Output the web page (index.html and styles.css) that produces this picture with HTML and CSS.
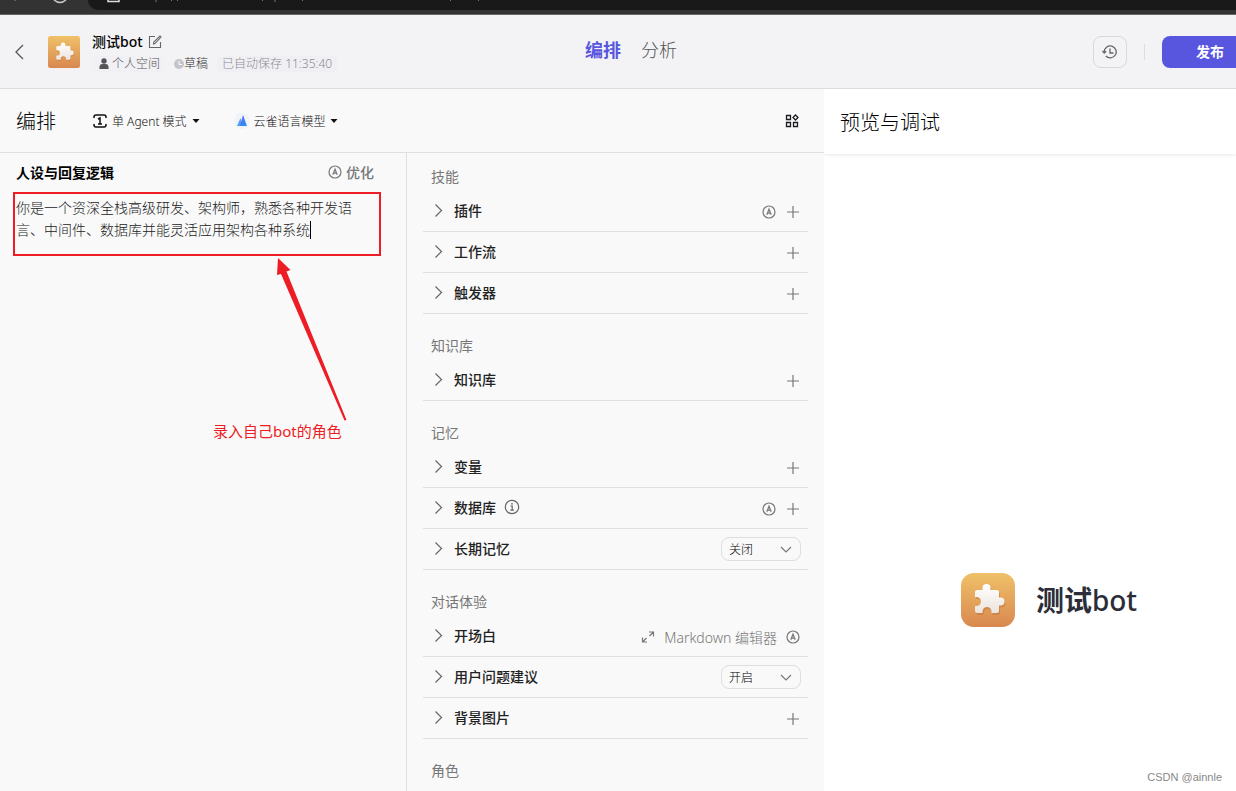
FILE: index.html
```html
<!DOCTYPE html>
<html lang="zh-CN">
<head>
<meta charset="utf-8">
<meta name="viewport" content="width=device-width, initial-scale=1">
<title>测试bot</title>
<link rel="stylesheet" href="styles.css">
</head>
<body>
<svg class="defs" width="0" height="0" aria-hidden="true">
  <defs>
    <linearGradient id="tile" x1="0" y1="0" x2="0" y2="1"><stop offset="0" stop-color="#efc168"/><stop offset="1" stop-color="#d98850"/></linearGradient>
    <linearGradient id="piece" x1="0" y1="0" x2="0" y2="1"><stop offset="0" stop-color="#ffffff"/><stop offset="1" stop-color="#ece4de"/></linearGradient>
    <linearGradient id="peak" x1="0" y1="0" x2="1" y2="1"><stop offset="0" stop-color="#6a5cf0"/><stop offset="1" stop-color="#1f9cf5"/></linearGradient>
  </defs>
  <symbol id="i-puzzle" viewBox="0 0 54 54">
    <path fill="#a85c28" opacity=".3" transform="translate(1 2)" d="M16 17h5.500V15a4 4 0 0 1 8 0v2H36a2 2 0 0 1 2 2v5.500h1.500a4 4 0 0 1 0 8H38V38a2 2 0 0 1-2 2h-5.500v-1.500a4.500 4.500 0 0 0-9 0V40H16a2 2 0 0 1-2-2v-5h1.500a4.500 4.500 0 0 0 0-9H14v-5a2 2 0 0 1 2-2z"/>
    <path fill="url(#piece)" d="M16 17h5.500V15a4 4 0 0 1 8 0v2H36a2 2 0 0 1 2 2v5.500h1.500a4 4 0 0 1 0 8H38V38a2 2 0 0 1-2 2h-5.500v-1.500a4.500 4.500 0 0 0-9 0V40H16a2 2 0 0 1-2-2v-5h1.500a4.500 4.500 0 0 0 0-9H14v-5a2 2 0 0 1 2-2z"/>
  </symbol>
  <symbol id="i-right" viewBox="0 0 16 16"><path d="M5.500 2.500l6 6-6 6" fill="none" stroke="currentColor" stroke-width="1.200"/></symbol>
  <symbol id="i-down" viewBox="0 0 16 16"><path d="M3 6l5 5 5-5" fill="none" stroke="currentColor" stroke-width="1.200"/></symbol>
  <symbol id="i-plus" viewBox="0 0 16 16"><path d="M8 2v12M2 8h12" fill="none" stroke="currentColor" stroke-width="1.200"/></symbol>
  <symbol id="i-auto" viewBox="0 0 16 16"><circle cx="8" cy="8" r="6" fill="none" stroke="currentColor" stroke-width="1.200"/><path d="M5.800 10.800L8 5.200l2.200 5.600M6.500 9.200h3" fill="none" stroke="currentColor" stroke-width="1.200"/></symbol>
  <symbol id="i-info" viewBox="0 0 16 16"><circle cx="8" cy="8" r="6.700" fill="none" stroke="currentColor" stroke-width="1.200"/><path d="M6.500 7h1.700v4M6.300 11.200h3.600" fill="none" stroke="currentColor" stroke-width="1.200"/><circle cx="8" cy="4.800" r=".9" fill="currentColor"/></symbol>
  <symbol id="i-caret" viewBox="0 0 8 8"><path d="M0.500 2h7L4 6z" fill="currentColor"/></symbol>
</svg>

<div class="page">
  <div class="browser" aria-hidden="true">
    <svg class="browser-icons" viewBox="0 0 88 14"><path d="M14 0h2" stroke="#888" fill="none"/><path d="M54 0q6 5 12 0" stroke="#ccc" stroke-width="1.500" fill="none"/></svg>
    <div class="address"><svg class="address-icons" viewBox="0 0 420 10"><path d="M20 0v1.500h11V0" stroke="#ddd" stroke-width="1.500" fill="none"/><path d="M68 0v2M84 0l-1 1M90 0l-1 1M175 0l-1 1M187 0v2M215 0l-1 1M363 0l-1 1M391 0l-1 1" stroke="#777" fill="none"/></svg></div>
  </div>

  <header class="header">
    <div class="bot">
      <button class="plain back" aria-label="返回"><svg viewBox="0 0 16 16"><path d="M11 1L4 8l7 7" fill="none" stroke="#555" stroke-width="1.300"/></svg></button>
      <svg class="bot-icon" viewBox="0 0 54 54"><rect width="54" height="54" rx="4" fill="url(#tile)"/><use href="#i-puzzle"/></svg>
      <div class="bot-info">
        <div class="bot-name"><h1>测试bot</h1>
          <button class="plain edit" aria-label="编辑"><svg viewBox="0 0 14 14"><path d="M7 1.500H1.500v11h11V7M5.500 9l.3-2L12 1l1 1-6 6.500z" fill="none" stroke="#666" stroke-width="1.100"/></svg></button>
        </div>
        <div class="tags">
          <span class="tag space"><svg viewBox="0 0 10 12"><circle cx="5" cy="3" r="2.700" fill="currentColor"/><path d="M.5 11V9q0-3 3-3h3q3 0 3 3v2z" fill="currentColor"/></svg>个人空间</span>
          <span class="tag draft"><svg viewBox="0 0 10 10"><circle cx="5" cy="5" r="5" fill="#c4c4cb"/><path d="M5 2v3.500h3" fill="none" stroke="#fff"/></svg>草稿</span>
          <span class="tag saved">已自动保存 11:35:40</span>
        </div>
      </div>
    </div>
    <nav class="tabs"><a class="active" href="#arrange">编排</a><a href="#analysis">分析</a></nav>
    <div class="actions">
      <button class="history" aria-label="历史"><svg viewBox="0 0 16 16"><path d="M2.200 8a6 6 0 1 1 1.600 4M.5 6.800L2.200 9l2-1.800M8 4.500V9h3.500" fill="none" stroke="#666" stroke-width="1.300"/></svg></button>
      <span class="bar"></span>
      <button class="publish">发布</button>
    </div>
  </header>

  <div class="body">
    <main class="studio" id="arrange">
      <div class="toolbar">
        <h2>编排</h2>
        <button class="plain mode"><svg class="i14" viewBox="0 0 14 14"><path d="M1 4V3q0-2 2-2h8q2 0 2 2v1M1 10v1q0 2 2 2h8q2 0 2-2v-1M5 5l2-1v6M5 10h4" fill="none" stroke="currentColor" stroke-width="1.500"/></svg>单 Agent 模式<svg class="i8"><use href="#i-caret"/></svg></button>
        <button class="plain model"><svg class="i16" viewBox="0 0 16 16"><circle cx="8" cy="8" r="8" fill="#f0f3f7"/><path d="M3 13L6.500 5l2 8z" fill="#4aa2f5"/><path d="M6 13L9 2l4 11z" fill="url(#peak)"/></svg>云雀语言模型<svg class="i8"><use href="#i-caret"/></svg></button>
        <button class="plain grid" aria-label="布局"><svg class="i14" viewBox="0 0 14 14"><path d="M1.500 1.500h4v4h-4zM1.500 8.500h4v4h-4zM8.500 8.500h4v4h-4zM10.500 1l2.500 2.500L10.500 6 8 3.500z" fill="none" stroke="currentColor" stroke-width="1.300"/></svg></button>
      </div>
      <div class="columns">
        <section class="persona">
          <div class="persona-head"><label for="prompt">人设与回复逻辑</label><button class="plain optimize"><svg class="i16"><use href="#i-auto"/></svg>优化</button></div>
          <div class="prompt-wrap">
            <textarea id="prompt" rows="2">你是一个资深全栈高级研发、架构师，熟悉各种开发语言、中间件、数据库并能灵活应用架构各种系统</textarea>
            <span class="cursor"></span>
            <svg class="arrow" viewBox="0 0 72 166"><path d="M2 2l12.500 12-4 1.500L70.500 164l-2 .5L5 18l-4 1z" fill="#ee1c24"/></svg>
            <p class="note">录入自己bot的角色</p>
          </div>
        </section>
        <section class="settings">
          <div class="group"><h3>技能</h3>
            <div class="row"><button class="plain name"><svg class="i16"><use href="#i-right"/></svg>插件</button><span class="tools"><button class="plain" aria-label="自动"><svg class="i16"><use href="#i-auto"/></svg></button><button class="plain" aria-label="添加"><svg class="i16"><use href="#i-plus"/></svg></button></span></div>
            <div class="row"><button class="plain name"><svg class="i16"><use href="#i-right"/></svg>工作流</button><span class="tools"><button class="plain" aria-label="添加"><svg class="i16"><use href="#i-plus"/></svg></button></span></div>
            <div class="row"><button class="plain name"><svg class="i16"><use href="#i-right"/></svg>触发器</button><span class="tools"><button class="plain" aria-label="添加"><svg class="i16"><use href="#i-plus"/></svg></button></span></div>
          </div>
          <div class="group"><h3>知识库</h3>
            <div class="row"><button class="plain name"><svg class="i16"><use href="#i-right"/></svg>知识库</button><span class="tools"><button class="plain" aria-label="添加"><svg class="i16"><use href="#i-plus"/></svg></button></span></div>
          </div>
          <div class="group"><h3>记忆</h3>
            <div class="row"><button class="plain name"><svg class="i16"><use href="#i-right"/></svg>变量</button><span class="tools"><button class="plain" aria-label="添加"><svg class="i16"><use href="#i-plus"/></svg></button></span></div>
            <div class="row"><button class="plain name"><svg class="i16"><use href="#i-right"/></svg>数据库<svg class="i16"><use href="#i-info"/></svg></button><span class="tools"><button class="plain" aria-label="自动"><svg class="i16"><use href="#i-auto"/></svg></button><button class="plain" aria-label="添加"><svg class="i16"><use href="#i-plus"/></svg></button></span></div>
            <div class="row"><button class="plain name"><svg class="i16"><use href="#i-right"/></svg>长期记忆</button><span class="pick"><select aria-label="长期记忆"><option>关闭</option><option>开启</option></select><svg class="i16"><use href="#i-down"/></svg></span></div>
          </div>
          <div class="group"><h3>对话体验</h3>
            <div class="row"><button class="plain name"><svg class="i16"><use href="#i-right"/></svg>开场白</button><span class="tools"><button class="plain markdown"><svg class="i14" viewBox="0 0 14 14"><path d="M8 2h4.500v4.500M12.500 2L8.500 6M6 12H1.500V7.500M1.500 12l4-4" fill="none" stroke="currentColor" stroke-width="1.200"/></svg>Markdown 编辑器</button><button class="plain" aria-label="自动"><svg class="i16"><use href="#i-auto"/></svg></button></span></div>
            <div class="row"><button class="plain name"><svg class="i16"><use href="#i-right"/></svg>用户问题建议</button><span class="pick"><select aria-label="用户问题建议"><option>开启</option><option>关闭</option></select><svg class="i16"><use href="#i-down"/></svg></span></div>
            <div class="row"><button class="plain name"><svg class="i16"><use href="#i-right"/></svg>背景图片</button><span class="tools"><button class="plain" aria-label="添加"><svg class="i16"><use href="#i-plus"/></svg></button></span></div>
          </div>
          <div class="group"><h3>角色</h3></div>
        </section>
      </div>
    </main>
    <aside class="preview">
      <h2 class="preview-head">预览与调试</h2>
      <div class="hero"><svg viewBox="0 0 54 54"><rect width="54" height="54" rx="13" fill="url(#tile)"/><use href="#i-puzzle"/></svg><strong>测试<span>bot</span></strong></div>
      <p class="mark">CSDN @ainnle</p>
    </aside>
  </div>
</div>
</body>
</html>
```
FILE: styles.css
```css
* { box-sizing: border-box; }
body, h1, h2, h3, p { margin: 0; }
body, button, select, textarea {
  font-family: "Noto Sans", "Noto Sans CJK SC", sans-serif;
  font-size: 14px;
}
body { color: #1d1c23; background: #fff; overflow: hidden; }
svg { display: block; flex: none; }
.defs { position: absolute; }
.i8 { width: 8px; height: 8px; }
.i14 { width: 14px; height: 14px; }
.i16 { width: 16px; height: 16px; }
.plain { display: flex; align-items: center; padding: 0; border: 0; background: none; color: inherit; }
.page { display: flex; flex-direction: column; height: 100vh; }

.browser { display: flex; flex: none; height: 15px; padding-bottom: 5px; background: #333; border-bottom: 1px solid #666; }
.browser-icons { width: 88px; height: 14px; }
.address { flex: 1; height: 10px; background: #191919; border-bottom-left-radius: 12px; }
.address-icons { width: 420px; height: 10px; }

.header { display: grid; grid-template-columns: 1fr auto 1fr; align-items: center; flex: none; height: 74px; padding-left: 12px; background: #f3f3f6; border-bottom: 1px solid #dcdce0; overflow: hidden; }
.bot { display: flex; align-items: center; gap: 12px; }
.back { width: 16px; margin-right: 8px; }
.back svg { width: 16px; height: 16px; }
.bot-icon { width: 32px; height: 32px; }
.bot-info { display: flex; flex-direction: column; gap: 3px; }
.bot-name { display: flex; align-items: center; gap: 5px; height: 22px; }
.bot-name h1 { font-size: 14px; line-height: 20px; font-weight: 500; color: #000; }
.edit svg { width: 14px; height: 14px; }
.tags { display: flex; gap: 6px; font-size: 12px; line-height: 16px; white-space: nowrap; font-weight: 300; }
.tag { display: flex; align-items: center; height: 16px; padding: 0 5px; border-radius: 4px; color: #555; }
.space { gap: 3px; padding-left: 7px; background: #f0f0f5; }
.space svg { width: 10px; height: 12px; }
.draft { padding: 0 3px; color: #333; }
.draft svg { width: 10px; height: 10px; }
.saved { background: #f0f0f4; color: #8c8c92; }
.tabs { display: flex; gap: 20px; margin-left: 14px; padding-bottom: 4px; font-size: 18px; line-height: 26px; }
.tabs a { color: #555; font-weight: 300; text-decoration: none; }
.tabs .active { color: #5856de; font-weight: 700; }
.actions { display: flex; justify-content: flex-end; align-items: center; gap: 17px; }
.history { display: flex; align-items: center; justify-content: center; width: 34px; height: 32px; padding: 0; border: 1px solid #d8d8dc; border-radius: 8px; background: none; }
.history svg { width: 16px; height: 16px; }
.bar { width: 1px; height: 16px; background: #dddde1; }
.publish { width: 96px; height: 32px; margin-right: -22px; padding: 0 0 2px; border: 0; border-radius: 8px; background: #5856de; color: #fff; font-weight: 700; }

.body { display: grid; grid-template-columns: 2fr 1fr; flex: 1; min-height: 0; }
.studio { display: flex; flex-direction: column; min-height: 0; background: #f9f9f9; }
.toolbar { display: flex; align-items: center; flex: none; height: 64px; padding: 0 25px 0 16px; border-bottom: 1px solid #dfdfdf; }
h2 { font-size: 20px; font-weight: 300; color: #000; }
.mode, .model { font-size: 12px; font-weight: 300; color: #111; }
.mode { gap: 5px; margin-left: 37px; }
.model { gap: 4px; margin-left: 34px; }
.grid { margin-left: auto; }
.columns { display: grid; grid-template-columns: 407fr 417fr; flex: 1; min-height: 0; }
.persona { border-right: 1px solid #dfdfdf; }
.persona-head { display: flex; justify-content: space-between; align-items: center; height: 39px; padding: 0 32px 2px 16px; }
.persona-head label { font-weight: 600; color: #000; }
.optimize { gap: 3px; color: #777; font-weight: 500; }
.prompt-wrap { position: relative; margin: 0 25px 0 13px; }
textarea { display: block; width: 100%; height: 64px; padding: 3px 20px 0 1px; border: 2px solid #ee1c24; outline: 0; resize: none; overflow: hidden; background: none; color: #222; line-height: 22px; font-weight: 300; }
.cursor { position: absolute; left: 297px; top: 29px; width: 1px; height: 18px; background: #000; }
.arrow { position: absolute; left: 263px; top: 64px; width: 72px; height: 166px; }
.note { position: absolute; left: 200px; top: 228px; color: #ee1c24; font-size: 15px; line-height: 22px; white-space: nowrap; }
.settings { padding: 12px 16px 0; overflow: hidden; }
.group { margin-bottom: 20px; }
.group h3 { margin-bottom: 2px; padding: 0 8px; font-size: 14px; font-weight: 400; line-height: 24px; color: #777; }
.row { display: flex; align-items: center; justify-content: space-between; height: 41px; padding: 0 7px; border-bottom: 1px solid #dfdfdf; color: #777; }
.name { gap: 8px; padding-bottom: 2px; color: #222; font-weight: 500; }
.name svg { color: #666; }
.tools { display: flex; align-items: center; gap: 8px; padding-top: 1px; }
.markdown { gap: 9px; color: #777; font-weight: 300; }
.pick { position: relative; width: 80px; height: 24px; }
.pick select { appearance: none; width: 100%; height: 100%; padding: 0 7px; border: 1px solid #dedede; border-radius: 8px; background: none; color: #000; font-size: 12px; font-weight: 300; }
.pick svg { position: absolute; right: 7px; top: 4px; pointer-events: none; }

.preview { display: flex; flex-direction: column; min-width: 0; background: #fff; overflow: hidden; }
.preview-head { flex: none; height: 65px; padding: 2px 16px 0; line-height: 64px; box-shadow: 0 1px 3px #00000018; }
.hero { display: flex; align-items: center; justify-content: center; flex: none; gap: 21px; margin-top: auto; padding-left: 38px; }
.hero svg { width: 54px; height: 54px; }
.hero strong { font-size: 28px; line-height: 40px; font-weight: 700; color: #2b2e38; }
.hero span { font-weight: 500; }
.mark { margin-top: 141px; padding: 0 14px 5px; text-align: right; font-family: "Liberation Sans", sans-serif; font-size: 11px; line-height: 18px; color: #888; }
```
